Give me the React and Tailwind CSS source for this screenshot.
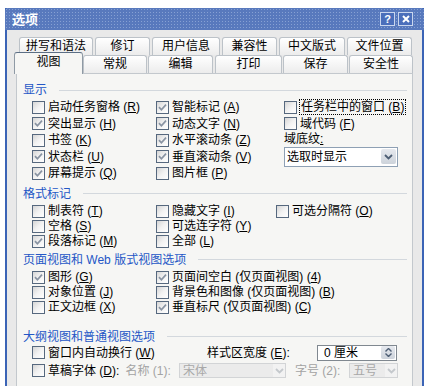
import React from 'react';

const Box = ({ checked }) => (
  <span className="w-[13px] h-[13px] shrink-0 border border-[#56687e] bg-linear-to-br from-[#d6d6d6] via-[#f2f2f2] to-white flex items-center justify-center">
    {checked && (
      <svg width="9" height="9" viewBox="0 0 9 9">
        <path d="M1 4.2 L3.4 6.8 L8 1.6" stroke="#8893a2" strokeWidth="1.7" fill="none" />
      </svg>
    )}
  </span>
);

const Label = ({ text, k, tail }) => (
  <span className="whitespace-nowrap">
    {text} (<span className="underline">{k}</span>){tail}
  </span>
);

const Check = ({ checked, text, k, className = '', focus = false, tail }) => (
  <div className={`flex items-center gap-[3px] shrink-0 leading-[14px] ${className}`}>
    <Box checked={checked} />
    <span className={focus ? 'outline-1 outline-dotted outline-black px-[1px]' : ''}>
      <Label text={text} k={k} tail={tail} />
    </span>
  </div>
);

const Header = ({ title, className = '' }) => (
  <div className={`flex items-center h-[16px] leading-[14px] ${className}`}>
    <span className="text-[#2457c6] whitespace-nowrap">{title}</span>
    <span className="flex-1 ml-[12px] h-px bg-[#d3d8dd]" />
  </div>
);

const Chevron = ({ color = '#4d5e74' }) => (
  <svg width="9" height="6" viewBox="0 0 9 6">
    <path d="M1 1 L4.5 4.5 L8 1" stroke={color} strokeWidth="1.8" fill="none" />
  </svg>
);

const Tab = ({ label, w }) => (
  <div className={`${w} h-[18px] shrink-0 rounded-t-[3px] border border-b-0 border-[#bcc2c8] bg-linear-to-b from-white to-[#ececec] flex items-start justify-center leading-[17px]`}>
    {label}
  </div>
);

export default function App() {
  return (
    <div className="w-[448px] h-[386px] bg-white overflow-hidden font-['Liberation_Sans','Noto_Sans_CJK_SC',sans-serif] text-[12px] text-black">
      <div className="ml-[5px] mt-[8px] w-[419px] h-[378px] flex flex-col border-x-2 border-[#3b64b6]">
        {/* Title bar */}
        <div className="h-[22px] -mx-[2px] px-[7px] flex items-center justify-between bg-[#5879bd] bg-[radial-gradient(circle,#86a0d3_0.8px,transparent_1px)] bg-[length:3px_3px] rounded-t-[3px]">
          <span className="text-white font-bold text-[13px] leading-none">选项</span>
          <div className="flex gap-[3px] mr-[4px]">
            <div className="w-[15px] h-[14px] border border-[#c9d6ee] bg-[#4b6fbb] text-white text-[11px] font-bold leading-[12px] text-center">?</div>
            <div className="w-[15px] h-[14px] border border-[#c9d6ee] bg-[#4b6fbb] flex items-center justify-center">
              <svg width="8" height="8" viewBox="0 0 8 8">
                <path d="M1 1 L7 7 M7 1 L1 7" stroke="white" strokeWidth="2" />
              </svg>
            </div>
          </div>
        </div>

        {/* Body */}
        <div className="flex-1 bg-[#e9e9e9] pt-[7px] px-[9px] flex flex-col">
          {/* Back tab row */}
          <div className="h-[16px] ml-[3px] flex gap-[2px]">
            <Tab label="拼写和语法" w="w-[74px]" />
            <Tab label="修订" w="w-[55px]" />
            <Tab label="用户信息" w="w-[68px]" />
            <Tab label="兼容性" w="w-[55px]" />
            <Tab label="中文版式" w="w-[66px]" />
            <Tab label="文件位置" w="w-[65px]" />
          </div>
          {/* Front tab row */}
          <div className="relative z-10 h-[20px] -ml-[2px] flex items-end">
            <div className="w-[69px] h-[22px] -mb-px shrink-0 rounded-t-[3px] border border-b-0 border-[#8f9aa5] border-t-[#5c6f85] bg-[#f6f6f4] flex justify-center leading-[19px]">视图</div>
            <Tab label="常规" w="w-[64px]" />
            <div className="ml-[1px]"><Tab label="编辑" w="w-[65px]" /></div>
            <div className="ml-[2px]"><Tab label="打印" w="w-[67px]" /></div>
            <div className="ml-[1px]"><Tab label="保存" w="w-[65px]" /></div>
            <div className="ml-[1px]"><Tab label="安全性" w="w-[64px]" /></div>
          </div>

          {/* Panel */}
          <div className="flex-1 border border-b-0 border-[#c3c8cd] bg-[#f6f6f4] pt-[8px] pl-[6px] pr-[5px] leading-[14px]">
            <Header title="显示" />
            <div className="mt-[1px] pl-[9px]">
              <div className="h-[16.5px] flex items-center">
                <Check text="启动任务窗格" k="R" className="w-[124px]" />
                <Check checked text="智能标记" k="A" className="w-[128px]" />
                <Check text="任务栏中的窗口" k="B" focus />
              </div>
              <div className="h-[16.5px] flex items-center">
                <Check checked text="突出显示" k="H" className="w-[124px]" />
                <Check checked text="动态文字" k="N" className="w-[128px]" />
                <Check text="域代码" k="F" />
              </div>
              <div className="h-[16.5px] flex items-center">
                <Check text="书签" k="K" className="w-[124px]" />
                <Check checked text="水平滚动条" k="Z" className="w-[128px]" />
                <span className="-mt-[3px]">域底纹<span className="underline">:</span></span>
              </div>
              <div className="h-[16.5px] flex items-center">
                <Check checked text="状态栏" k="U" className="w-[124px]" />
                <Check checked text="垂直滚动条" k="V" className="w-[128px]" />
                <div className="w-[114px] h-[20px] shrink-0 border border-[#8ea0b4] bg-white flex items-center justify-between pl-[2px] pr-[1px]">
                  <span>选取时显示</span>
                  <span className="w-[15px] h-[15px] rounded-[2px] bg-linear-to-b from-[#e6e9ee] to-[#cdd3db] flex items-center justify-center">
                    <Chevron />
                  </span>
                </div>
              </div>
              <div className="h-[16.5px] flex items-center">
                <Check checked text="屏幕提示" k="Q" className="w-[124px]" />
                <Check text="图片框" k="P" className="w-[128px]" />
              </div>
            </div>

            <Header title="格式标记" className="mt-[4px]" />
            <div className="mt-[2px] pl-[9px]">
              <div className="h-[15px] flex items-center">
                <Check text="制表符" k="T" className="w-[124px]" />
                <Check text="隐藏文字" k="I" className="w-[120px]" />
                <Check text="可选分隔符" k="O" />
              </div>
              <div className="h-[15px] flex items-center">
                <Check text="空格" k="S" className="w-[124px]" />
                <Check text="可选连字符" k="Y" />
              </div>
              <div className="h-[15px] flex items-center">
                <Check checked text="段落标记" k="M" className="w-[124px]" />
                <Check text="全部" k="L" />
              </div>
            </div>

            <Header title="页面视图和 Web 版式视图选项" className="mt-[3px]" />
            <div className="mt-[2px] pl-[9px]">
              <div className="h-[15px] flex items-center">
                <Check checked text="图形" k="G" className="w-[124px]" />
                <Check checked text="页面间空白 (仅页面视图)" k="4" />
              </div>
              <div className="h-[15px] flex items-center">
                <Check text="对象位置" k="J" className="w-[124px]" />
                <Check text="背景色和图像 (仅页面视图)" k="B" />
              </div>
              <div className="h-[15px] flex items-center">
                <Check text="正文边框" k="X" className="w-[124px]" />
                <Check checked text="垂直标尺 (仅页面视图)" k="C" />
              </div>
            </div>

            <Header title="大纲视图和普通视图选项" className="mt-[14px]" />
            <div className="pl-[9px]">
              <div className="h-[16px] flex items-center">
                <Check text="窗口内自动换行" k="W" className="w-[175px]" />
                <span className="w-[110px] shrink-0"><Label text="样式区宽度" k="E" tail=":" /></span>
                <div className="w-[80px] h-[16px] shrink-0 border border-[#808890] bg-white flex items-center justify-between pl-[6px] pr-[1px]">
                  <span>0 厘米</span>
                  <span className="w-[14px] h-[13px] rounded-[2px] bg-linear-to-b from-[#e6e9ee] to-[#cdd3db] flex flex-col items-center justify-center gap-[1px]">
                    <svg width="7" height="4" viewBox="0 0 7 4"><path d="M0.5 3.5 L3.5 0.5 L6.5 3.5" stroke="#4d5e74" strokeWidth="1.4" fill="none" /></svg>
                    <svg width="7" height="4" viewBox="0 0 7 4"><path d="M0.5 0.5 L3.5 3.5 L6.5 0.5" stroke="#4d5e74" strokeWidth="1.4" fill="none" /></svg>
                  </span>
                </div>
              </div>
              <div className="mt-[2px] h-[16px] flex items-center">
                <div className="w-[147px] shrink-0 flex items-center">
                  <Check text="草稿字体" k="D" tail=":" />
                  <span className="ml-[6px] text-[#a3a3a3] whitespace-nowrap">名称 (1):</span>
                </div>
                <div className="w-[107px] h-[15px] shrink-0 border border-[#d2d4d6] bg-[#ebebeb] flex items-center justify-between pl-[3px] text-[#a8a8a8]">
                  <span>宋体</span>
                  <span className="w-[12px] h-[13px] bg-[#f2f2f2] flex items-center justify-center"><Chevron color="#c4c8cc" /></span>
                </div>
                <span className="ml-[9px] w-[54px] shrink-0 text-[#a3a3a3] whitespace-nowrap">字号 (2):</span>
                <div className="w-[49px] h-[15px] shrink-0 border border-[#d2d4d6] bg-[#ebebeb] flex items-center justify-between pl-[3px] text-[#a8a8a8]">
                  <span>五号</span>
                  <span className="w-[12px] h-[13px] bg-[#f2f2f2] flex items-center justify-center"><Chevron color="#c4c8cc" /></span>
                </div>
              </div>
            </div>
          </div>
        </div>
      </div>
    </div>
  );
}
